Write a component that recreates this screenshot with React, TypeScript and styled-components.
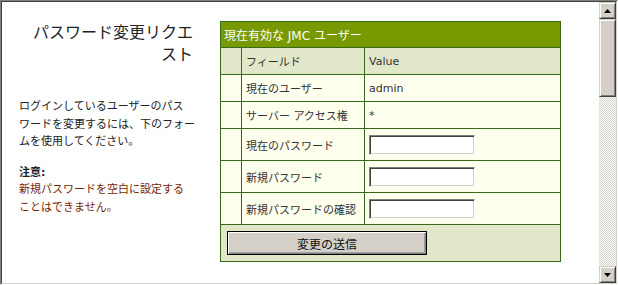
import styled, { createGlobalStyle } from 'styled-components';

const GlobalStyle = createGlobalStyle`
  html, body {
    margin: 0;
    padding: 0;
    background: #fff;
  }
  body {
    font-family: "DejaVu Sans", "Noto Sans CJK JP", sans-serif;
    color: #222;
  }
`;

const rows = [
  { label: '現在のユーザー', value: 'admin' },
  { label: 'サーバー アクセス権', value: '*' },
];

const passwordRows = ['現在のパスワード', '新規パスワード', '新規パスワードの確認'];

const Arrow = ({ down }: { down?: boolean }) => (
  <svg width="7" height="4" viewBox="0 0 7 4">
    <polygon points={down ? '0,0 7,0 3.5,4' : '3.5,0 7,4 0,4'} fill="#000" />
  </svg>
);

export default function App() {
  return (
    <>
      <GlobalStyle />
      <Frame>
        <Inner>
          <Content>
            <Sidebar>
              <Title>
                パスワード変更リクエ
                <br />
                スト
              </Title>
              <Intro>
                ログインしているユーザーのパス
                <br />
                ワードを変更するには、下のフォー
                <br />
                ムを使用してください。
              </Intro>
              <Note>
                <NoteLabel>注意:</NoteLabel>
                <Warning>
                  新規パスワードを空白に設定する
                  <br />
                  ことはできません。
                </Warning>
              </Note>
            </Sidebar>

            <UserTable>
              <Cell $tone="title" $span>
                現在有効な JMC ユーザー
              </Cell>
              <Cell $tone="head" />
              <Cell $tone="head">フィールド</Cell>
              <Cell $tone="head">Value</Cell>
              {rows.map((r) => (
                <Row key={r.label}>
                  <Cell $tone="body" />
                  <Cell $tone="body">{r.label}</Cell>
                  <Cell $tone="body">{r.value}</Cell>
                </Row>
              ))}
              {passwordRows.map((label) => (
                <Row key={label}>
                  <Cell $tone="body" />
                  <Cell $tone="body">{label}</Cell>
                  <Cell $tone="body">
                    <PasswordInput type="password" />
                  </Cell>
                </Row>
              ))}
              <Cell $tone="foot" $span>
                <SubmitButton type="button">変更の送信</SubmitButton>
              </Cell>
            </UserTable>
          </Content>

          <ScrollBar>
            <ScrollButton>
              <Arrow />
            </ScrollButton>
            <Thumb />
            <Track />
            <ScrollButton>
              <Arrow down />
            </ScrollButton>
          </ScrollBar>
        </Inner>
      </Frame>
    </>
  );
}

const Frame = styled.div`
  width: 618px;
  height: 285px;
  box-sizing: border-box;
  border: 1px solid;
  border-color: #808080 #fff #fff #808080;
`;

const Inner = styled.div`
  height: 100%;
  box-sizing: border-box;
  border: 1px solid;
  border-color: #404040 #d4d0c8 #d4d0c8 #404040;
  display: flex;
`;

const Content = styled.div`
  flex: 1;
  background: #fff;
  overflow: hidden;
  display: flex;
  align-items: flex-start;
  gap: 25px;
  padding: 19px 0 0 17px;
`;

const Sidebar = styled.div`
  width: 176px;
  flex-shrink: 0;
  white-space: nowrap;
`;

const Title = styled.h1`
  margin: 1px 0 0;
  padding-right: 2px;
  font-size: 16px;
  font-weight: normal;
  line-height: 22px;
  text-align: right;
  color: #222;
`;

const Intro = styled.p`
  margin: 32px 0 0;
  font-size: 11px;
  line-height: 17.5px;
`;

const Note = styled.div`
  margin-top: 13px;
  font-size: 11px;
  line-height: 17.5px;
`;

const NoteLabel = styled.strong`
  display: block;
  font-weight: bold;
  color: #222;
`;

const Warning = styled.span`
  color: #7a1e00;
`;

const UserTable = styled.div`
  display: grid;
  grid-template-columns: 20px 122px 195px;
  grid-template-rows: 25px 26px 26px 26px 31px 31px 31px 36px;
  gap: 1px;
  padding: 1px;
  background: #376a1c;
  flex-shrink: 0;
`;

const Row = styled.div`
  display: contents;
`;

type Tone = 'title' | 'head' | 'body' | 'foot';

const toneBg: Record<Tone, string> = {
  title: '#789a00',
  head: '#e1e8c9',
  body: '#ffffee',
  foot: '#e1e8c9',
};

const Cell = styled.div<{ $tone: Tone; $span?: boolean }>`
  grid-column: ${(p) => (p.$span ? '1 / -1' : 'auto')};
  display: flex;
  align-items: ${(p) => (p.$tone === 'foot' ? 'flex-start' : 'center')};
  padding: ${(p) =>
    p.$tone === 'title' ? '0 0 1px 3px' : p.$tone === 'foot' ? '6px 0 0 6px' : '0 0 0 4px'};
  background: ${(p) => toneBg[p.$tone]};
  color: ${(p) => (p.$tone === 'title' ? '#fff' : '#333')};
  font-size: ${(p) => (p.$tone === 'title' ? '12px' : '11px')};
  white-space: nowrap;
`;

const PasswordInput = styled.input`
  width: 106px;
  height: 20px;
  box-sizing: border-box;
  margin: 0;
  padding: 1px 3px;
  background: #fff;
  border: 1px solid;
  border-color: #808080 #fff #fff #808080;
  box-shadow: inset 1px 1px 0 #404040, inset -1px -1px 0 #d4d0c8;
  outline: none;
`;

const SubmitButton = styled.button`
  width: 200px;
  height: 24px;
  margin: 0;
  padding: 0;
  background: #d4d0c8;
  border: 1px solid #000;
  box-shadow: inset 1px 1px 0 #fff, inset -1px -1px 0 #808080, inset -2px -2px 0 #a0a0a0;
  font-family: "DejaVu Sans", "Noto Sans CJK JP", sans-serif;
  font-size: 12px;
  color: #111;
  cursor: pointer;
`;

const ScrollBar = styled.div`
  width: 17px;
  flex-shrink: 0;
  display: flex;
  flex-direction: column;
`;

const Bevel = styled.div`
  box-sizing: border-box;
  background: #d4d0c8;
  border: 1px solid;
  border-color: #d4d0c8 #404040 #404040 #d4d0c8;
  box-shadow: inset 1px 1px 0 #fff, inset -1px -1px 0 #808080;
`;

const ScrollButton = styled(Bevel)`
  height: 17px;
  display: flex;
  align-items: center;
  justify-content: center;
`;

const Thumb = styled(Bevel)`
  height: 78px;
`;

const Track = styled.div`
  flex: 1;
  background-image: conic-gradient(#fff 25%, #d4d0c8 0 50%, #fff 0 75%, #d4d0c8 0);
  background-size: 2px 2px;
`;
